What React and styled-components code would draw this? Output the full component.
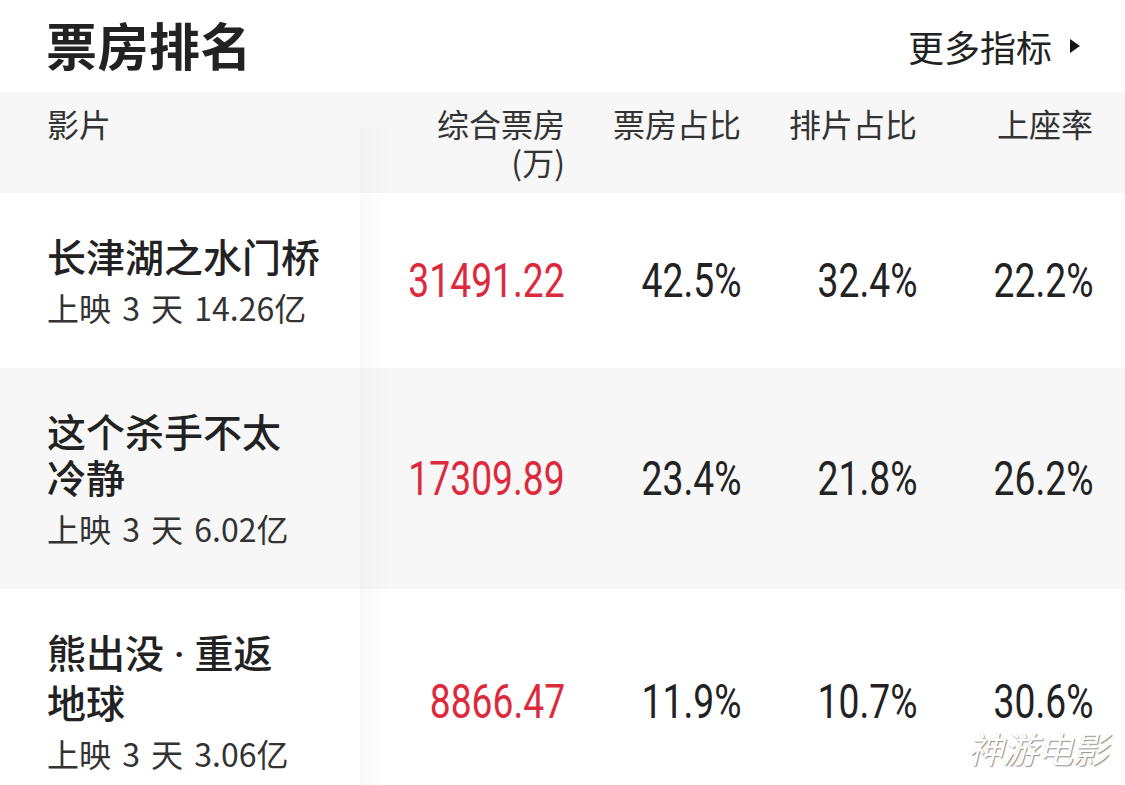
import React from "react";
import styled, { createGlobalStyle } from "styled-components";

const Global = createGlobalStyle`
  html, body { margin: 0; padding: 0; background: #fff; }
  body { font-family: "Noto Sans CJK SC", "Noto Sans", sans-serif; color: #222; }
`;

const Page = styled.div`
  width: 1125px;
  height: 785px;
  overflow: hidden;
  position: relative;
  background: #fff;
`;

const TopBar = styled.div`
  height: 92px;
  display: flex;
  align-items: center;
  justify-content: space-between;
  padding: 0 45px 4px 46px;
  box-sizing: border-box;
`;

const Title = styled.h1`
  margin: 0;
  font-size: 51px;
  line-height: 1;
  font-weight: 700;
  color: #222;
  letter-spacing: 0.5px;
`;

const More = styled.div`
  display: flex;
  align-items: center;
  gap: 18px;
  font-size: 36px;
  line-height: 1;
  color: #222;
  padding-top: 4px;
`;

const Triangle = styled.span`
  width: 0;
  height: 0;
  border-left: 10px solid #111;
  border-top: 7px solid transparent;
  border-bottom: 7px solid transparent;
`;

const Table = styled.div`
  position: relative;
  &::after {
    content: "";
    position: absolute;
    left: 360px;
    top: 36px;
    bottom: 0;
    width: 30px;
    background: linear-gradient(to right, rgba(0, 0, 0, 0.025), rgba(0, 0, 0, 0));
    pointer-events: none;
  }
`;

const Row = styled.div`
  display: grid;
  grid-template-columns: 360px 237px 176px 176px 176px;
  align-items: ${(p) => (p.$head ? "start" : "center")};
  background: ${(p) => (p.$shade ? "#f7f7f7" : "#fff")};
  padding: ${(p) => (p.$head ? "12px 0 13px" : "0")};
`;

const HeadCell = styled.div`
  font-size: 32px;
  line-height: 38px;
  color: #333;
  padding: ${(p) => (p.$left ? "0 0 0 47px" : "0 32px 0 0")};
  display: flex;
  justify-content: ${(p) => (p.$left ? "flex-start" : "flex-end")};
`;

const HeadLabel = styled.span`
  display: block;
  max-width: ${(p) => p.$wrap || "none"};
  text-align: right;
`;

const FilmCell = styled.div`
  padding: 39px 0 42px 47px;
  display: flex;
  flex-direction: column;
  gap: 10px;
`;

const FilmName = styled.div`
  font-size: 39px;
  line-height: 46px;
  font-weight: 500;
  color: #222;
  max-width: 290px;
`;

const Word = styled.span`
  white-space: nowrap;
`;

const Dot = styled.span`
  font-family: Roboto, sans-serif;
  white-space: pre;
`;

const FilmMeta = styled.div`
  font-size: 32px;
  line-height: 38px;
  color: #333;
  word-spacing: 4px;
`;

const NumCell = styled.div`
  padding-right: 32px;
  display: flex;
  justify-content: flex-end;
`;

const Num = styled.span`
  display: inline-block;
  font-family: Roboto, "Noto Sans", sans-serif;
  font-size: 49px;
  line-height: 1;
  font-weight: 400;
  color: ${(p) => (p.$red ? "#dc2a3c" : "#222")};
  transform: scaleX(0.76);
  transform-origin: right center;
  white-space: nowrap;
`;

const Watermark = styled.div`
  position: absolute;
  right: 18px;
  bottom: 20px;
  font-size: 36px;
  line-height: 1;
  color: #fff;
  font-style: italic;
  letter-spacing: -1px;
  text-shadow: 1px 1px 1px rgba(0, 0, 0, 0.45), -0.5px -0.5px 0 rgba(0, 0, 0, 0.15);
`;

const films = [
  { name: [["长津湖之水门桥"]], meta: "上映 3 天 14.26亿", box: "31491.22", share: "42.5%", sched: "32.4%", seat: "22.2%" },
  { name: [["这个", "杀手", "不太", "冷静"]], meta: "上映 3 天 6.02亿", box: "17309.89", share: "23.4%", sched: "21.8%", seat: "26.2%" },
  { name: [["熊出没"], ["重返", "地球"]], meta: "上映 3 天 3.06亿", box: "8866.47", share: "11.9%", sched: "10.7%", seat: "30.6%" },
];

function Name({ parts }) {
  return parts.map((group, gi) => (
    <React.Fragment key={gi}>
      {gi > 0 && <Dot> · </Dot>}
      {group.map((w, wi) => (
        <Word key={wi}>{w}</Word>
      ))}
    </React.Fragment>
  ));
}

export default function App() {
  return (
    <Page>
      <Global />
      <TopBar>
        <Title>票房排名</Title>
        <More>
          更多指标
          <Triangle />
        </More>
      </TopBar>
      <Table>
        <Row $head $shade>
          <HeadCell $left>影片</HeadCell>
          <HeadCell>
            <HeadLabel $wrap="135px">综合票房(万)</HeadLabel>
          </HeadCell>
          <HeadCell>票房占比</HeadCell>
          <HeadCell>排片占比</HeadCell>
          <HeadCell>上座率</HeadCell>
        </Row>
        {films.map((f, i) => (
          <Row key={f.box} $shade={i % 2 === 1}>
            <FilmCell>
              <FilmName>
                <Name parts={f.name} />
              </FilmName>
              <FilmMeta>{f.meta}</FilmMeta>
            </FilmCell>
            <NumCell>
              <Num $red>{f.box}</Num>
            </NumCell>
            <NumCell>
              <Num>{f.share}</Num>
            </NumCell>
            <NumCell>
              <Num>{f.sched}</Num>
            </NumCell>
            <NumCell>
              <Num>{f.seat}</Num>
            </NumCell>
          </Row>
        ))}
      </Table>
      <Watermark>神游电影</Watermark>
    </Page>
  );
}
